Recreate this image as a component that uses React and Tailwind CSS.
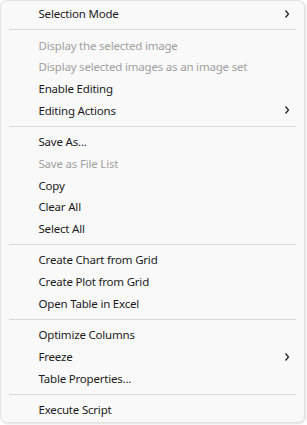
import React from "react";

const groups = [
  [{ t: "Selection Mode", sub: true }],
  [
    { t: "Display the selected image", dis: true },
    { t: "Display selected images as an image set", dis: true },
    { t: "Enable Editing" },
    { t: "Editing Actions", sub: true },
  ],
  [
    { t: "Save As..." },
    { t: "Save as File List", dis: true },
    { t: "Copy" },
    { t: "Clear All" },
    { t: "Select All" },
  ],
  [
    { t: "Create Chart from Grid" },
    { t: "Create Plot from Grid" },
    { t: "Open Table in Excel" },
  ],
  [
    { t: "Optimize Columns" },
    { t: "Freeze", sub: true },
    { t: "Table Properties..." },
  ],
  [{ t: "Execute Script" }],
];

function Chevron() {
  return (
    <svg width="6" height="10" viewBox="0 0 6 10" className="mr-[14px]">
      <polyline points="1.5,1.5 4.5,5 1.5,8.5" fill="none" stroke="#1b1b1b" strokeWidth="1.2" />
    </svg>
  );
}

export default function App() {
  return (
    <div className="w-[307px] h-[425px] bg-white">
      <div className="w-[305px] h-[423px] bg-[#f9f9f9] border border-[#e3e3e3] rounded-[7px] shadow-[1px_1px_2px_rgba(0,0,0,0.12)] pt-[2px] flex flex-col text-[11.5px] tracking-[-0.2px] font-['Noto_Sans','Segoe_UI',sans-serif]">
        {groups.map((g, gi) => (
          <React.Fragment key={gi}>
            {gi > 0 && (
              <div className="h-[9.8px] flex flex-col justify-center px-[8px]">
                <div className="h-px bg-[#d9d9d9]" />
              </div>
            )}
            {g.map((it) => (
              <div
                key={it.t}
                className={`h-[21.7px] flex items-center justify-between pl-[37.5px] ${
                  it.dis ? "text-[#a0a0a0]" : "text-[#1b1b1b]"
                }`}
              >
                <span className="leading-none">{it.t}</span>
                {it.sub && <Chevron />}
              </div>
            ))}
          </React.Fragment>
        ))}
      </div>
    </div>
  );
}
